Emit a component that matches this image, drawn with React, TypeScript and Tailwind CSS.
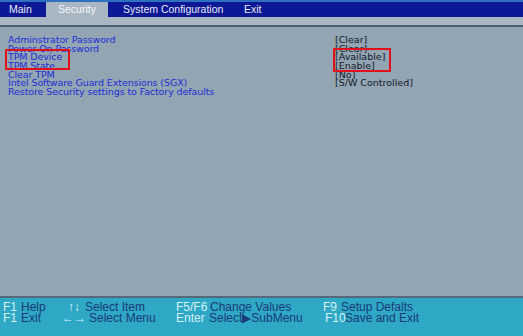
const tabs = ["Main", "Security", "System Configuration", "Exit"];

const rows: { label: string; value: string }[] = [
  { label: "Adminstrator Password", value: "[Clear]" },
  { label: "Power-On Password", value: "[Clear]" },
  { label: "TPM Device", value: "[Available]" },
  { label: "TPM State", value: "[Enable]" },
  { label: "Clear TPM", value: "[No]" },
  { label: "Intel Software Guard Extensions (SGX)", value: "[S/W Controlled]" },
  { label: "Restore Security settings to Factory defaults", value: "" },
];

export default function App() {
  return (
    <div className="w-[523px] h-[336px] flex flex-col bg-[#93a4b2] overflow-hidden" style={{ fontFamily: '"Liberation Sans", Arial, sans-serif' }}>
      {/* top menu bar */}
      <div className="h-[17px] flex items-stretch bg-[#0c1896] border-t-2 border-[#2f6fc0]">
        <div className="w-[6px]" />
        {tabs.map((t) => (
          <div
            key={t}
            className={
              t === "Security"
                ? "bg-[#a9b6c4] text-[#f4f7fa] text-[10.5px] leading-[15px] w-[62px] text-center"
                : t === "Main"
                  ? "text-[#e6ebf5] text-[10.5px] leading-[15px] pl-[3px] w-[40px]"
                  : t === "Exit"
                    ? "text-[#e6ebf5] text-[10.5px] leading-[15px] pl-[15px]"
                    : "text-[#e6ebf5] text-[10.5px] leading-[15px] pl-[15px] w-[121px]"
            }
          >
            {t}
          </div>
        ))}
      </div>
      <div className="h-[10px] bg-[#a9b6c4] border-b-2 border-[#4e5f6e]" />

      {/* body */}
      <div className="flex-1 pt-[9px] pl-[8px] border-b-2 border-[#56687a]" style={{ fontFamily: '"DejaVu Sans", Verdana, sans-serif' }}>
        <div className="relative">
          {rows.map((r) => (
            <div key={r.label} className="flex h-[8.7px] leading-[8.7px] text-[9.5px]">
              <div className="w-[327px] text-[#1b2fd6] tracking-[-0.1px]">{r.label}</div>
              <div className="text-[#141a2a]">{r.value}</div>
            </div>
          ))}
          <div className="absolute left-[-3px] top-[13px] w-[65px] h-[21px] border-2 border-[#e0111b]" />
          <div className="absolute left-[325px] top-[12px] w-[58px] h-[24px] border-2 border-[#e0111b]" />
        </div>
      </div>

      {/* footer help */}
      <div className="h-[38px] bg-[#2ea8c4] pt-[4px] text-[12px] leading-[11px] text-[#1a3a78]">
        <div className="flex">
          <span className="w-[21px] pl-[3px] text-[#d4f2fb]">F1</span>
          <span className="w-[44px]">Help</span>
          <span className="w-[20px] text-[#d4f2fb] pl-[3px]">↑↓</span>
          <span className="w-[91px]">Select Item</span>
          <span className="w-[34px] text-[#d4f2fb]">F5/F6</span>
          <span className="w-[113px]">Change Values</span>
          <span className="w-[18px] text-[#d4f2fb]">F9</span>
          <span>Setup Defalts</span>
        </div>
        <div className="flex">
          <span className="w-[21px] pl-[3px] text-[#d4f2fb]">F1</span>
          <span className="w-[41px]">Exit</span>
          <span className="w-[27px] text-[#d4f2fb]">←→</span>
          <span className="w-[87px]">Select Menu</span>
          <span className="w-[33px] text-[#d4f2fb]">Enter</span>
          <span className="w-[116px]">Select▶SubMenu</span>
          <span className="w-[20px] text-[#d4f2fb]">F10</span>
          <span>Save and Exit</span>
        </div>
      </div>
    </div>
  );
}
